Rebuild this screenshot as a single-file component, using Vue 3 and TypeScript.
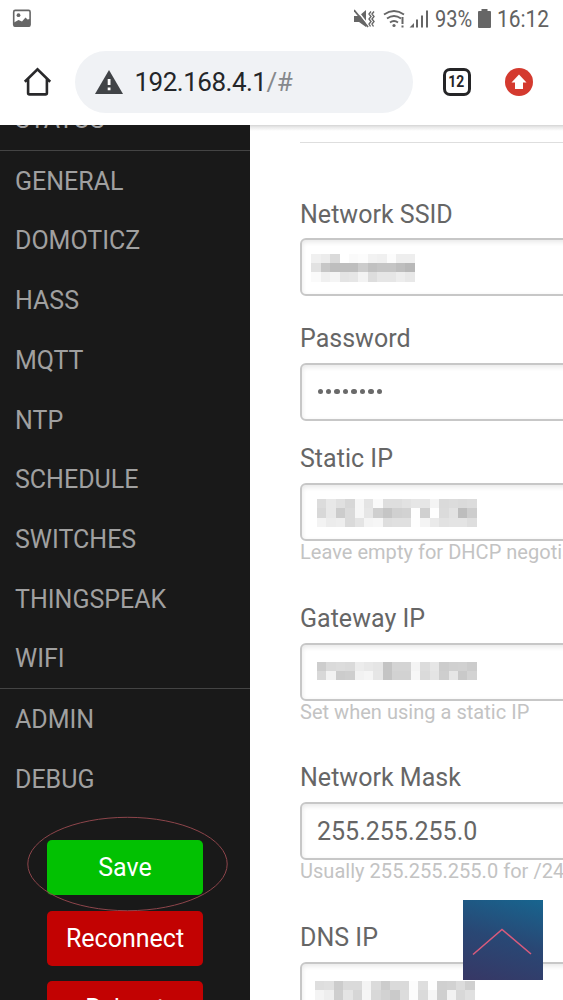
<script setup lang="ts">
interface Mosaic {
  x: number
  y: number
  rows: number[][]
}
interface Field {
  label: string
  gap: string
  value?: string
  password?: boolean
  hint?: string
  mosaic?: Mosaic
}

const cell = 9.4
const mainItems: string[] = ['GENERAL', 'DOMOTICZ', 'HASS', 'MQTT', 'NTP', 'SCHEDULE', 'SWITCHES', 'THINGSPEAK', 'WIFI']
const systemItems: string[] = ['ADMIN', 'DEBUG']

const fields: Field[] = [
  {
    label: 'Network SSID', gap: 'first',
    mosaic: { x: 9.3, y: 14.6, rows: [
      [240, 236, 218, 255, 250, 252, 242, 240, 252, 238, 238],
      [226, 199, 190, 190, 190, 204, 193, 197, 197, 190, 184],
      [250, 240, 245, 228, 230, 243, 221, 230, 230, 237, 232],
    ] },
  },
  { label: 'Password', gap: 'second', password: true },
  {
    label: 'Static IP', gap: 'third', hint: 'Leave empty for DHCP negotiation',
    mosaic: { x: 15, y: 14.8, rows: [
      [220, 232, 224, 215, 246, 228, 250, 222, 222, 226, 230, 230, 244, 218, 220, 218, 220],
      [216, 232, 204, 218, 246, 230, 207, 197, 208, 210, 254, 208, 254, 219, 226, 189, 205],
      [243, 236, 238, 218, 228, 244, 246, 222, 224, 224, 254, 244, 234, 226, 228, 228, 222],
    ] },
  },
  {
    label: 'Gateway IP', gap: 'hinted', hint: 'Set when using a static IP',
    mosaic: { x: 15, y: 17.5, rows: [
      [205, 218, 220, 218, 236, 232, 229, 196, 212, 212, 244, 220, 230, 204, 208, 209, 204],
      [216, 242, 204, 206, 242, 245, 230, 196, 210, 210, 247, 218, 228, 206, 230, 201, 211],
    ] },
  },
  { label: 'Network Mask', gap: 'hinted', value: '255.255.255.0', hint: 'Usually 255.255.255.0 for /24 networks' },
  {
    label: 'DNS IP', gap: 'hinted',
    mosaic: { x: 13, y: 18, rows: [
      [222, 224, 204, 218, 218, 244, 219, 204, 218, 218, 252, 222, 254, 208, 210, 220, 208],
      [244, 238, 206, 228, 214, 246, 216, 210, 202, 220, 252, 218, 246, 207, 242, 216, 224],
      [244, 238, 206, 228, 214, 246, 216, 210, 202, 220, 252, 218, 246, 207, 242, 216, 224],
    ] },
  },
]

const grey = (v: number): string => `rgb(${v},${v},${v})`
</script>

<template>
  <div class="screen">
    <header class="chrome">
      <div class="status">
        <svg class="picture" width="20" height="20" viewBox="0 0 20 20">
          <rect x="1.7" y="1.4" width="16.4" height="15.8" rx="1.5" fill="#fff" stroke="#666" stroke-width="1.6" />
          <circle cx="6.5" cy="6.2" r="1.9" fill="#666" />
          <path d="M2 13.5l4.5-2.5 3.5 1.5 3.5-4 2 2 2.5-.5v7.5H2z" fill="#666" />
        </svg>
        <svg class="signals" width="78" height="22" viewBox="0 0 78 22">
          <g fill="none" stroke="#666" stroke-width="1.6">
            <path d="M0 7h5l7-6v17l-7-5H0z" fill="#666" stroke="none" />
            <path d="M2 0l13 17" stroke="#fff" stroke-width="1.6" />
            <path d="M0 1l14 17" stroke-width="1.8" />
            <path d="M17 2.5l-2 2.5 2 2.5-2 2.5 2 2.5-2 2.5 1.5 2.5M20 2.5l-2 2.5 2 2.5-2 2.5 2 2.5-2 2.5 1.5 2.5" stroke-width="1.4" />
            <path d="M30 5.5Q40-1.5 50 5.5M33 9.5q7-5 14 0M36 13.5q4-3 8 0" stroke-width="1.8" />
            <path d="M48.5 8v7M48.5 16.5v2" stroke-width="2" />
          </g>
          <circle cx="40" cy="16.5" r="1.6" fill="#666" />
          <path d="M55.5 18.5l4.5-4.5v4.5zM62 10.5h2v8h-2zM67 6.5h2v12h-2zM72 1.5h2v17h-2z" fill="#666" />
        </svg>
        <span class="percent">93%</span>
        <svg class="battery" width="13" height="19" viewBox="0 0 13 19"><path d="M3.5 0h6v2H12q1 0 1 1v15q0 1-1 1H1q-1 0-1-1V3q0-1 1-1h2.5z" fill="#666" /></svg>
        <span class="clock">16:12</span>
      </div>
      <div class="toolbar">
        <svg class="home" width="30" height="30" viewBox="0 0 30 30">
          <path d="M1.8 14.8L14.5 2.3l12.7 12.5M5.1 12v14q0 1.4 1.4 1.4h16q1.4 0 1.4-1.4V12" fill="none" stroke="#29292b" stroke-width="2.6" />
        </svg>
        <div class="address">
          <svg width="28" height="24" viewBox="0 0 28 24">
            <path d="M14 0l14 24H0z" fill="#414447" />
            <path d="M12.7 9h2.8v6h-2.8zM12.7 17.5h2.8v2.8h-2.8z" fill="#fff" />
          </svg>
          <span class="url">192.168.4.1<i>/#</i></span>
        </div>
        <div class="tabs"><span>12</span></div>
        <svg class="update" width="28" height="28" viewBox="0 0 28 28">
          <circle cx="14" cy="14" r="14" fill="#d43a2f" />
          <path d="M14 6.5l7.5 8H18V21h-8v-6.5H6.5z" fill="#fff" />
        </svg>
      </div>
    </header>

    <div class="page">
      <aside class="sidebar">
        <nav>
          <a class="item hidden-top">STATUS</a>
          <div class="group">
            <a v-for="item in mainItems" :key="item" class="item">{{ item }}</a>
          </div>
          <div class="group">
            <a v-for="item in systemItems" :key="item" class="item">{{ item }}</a>
          </div>
        </nav>
        <div class="buttons">
          <div class="button save">Save</div>
          <div class="button">Reconnect</div>
          <div class="button">Reboot</div>
          <svg class="ring" width="202" height="96" viewBox="0 0 202 96">
            <ellipse cx="100.5" cy="48" rx="99.7" ry="46.7" fill="none" stroke="#8d454b" stroke-width="1" />
          </svg>
        </div>
      </aside>
      <main class="content">
        <hr />
        <section v-for="field in fields" :key="field.label" class="field" :class="field.gap">
          <label>{{ field.label }}</label>
          <div class="input">
            <span v-if="field.value" class="value">{{ field.value }}</span>
            <span v-if="field.password" class="dots"><b v-for="n in 8" :key="n" /></span>
            <svg v-if="field.mosaic" width="262" height="56" viewBox="0 0 262 56" shape-rendering="crispEdges">
              <g :transform="`translate(${field.mosaic.x} ${field.mosaic.y})`">
                <template v-for="(row, r) in field.mosaic.rows" :key="r">
                  <rect v-for="(v, c) in row" :key="c" :x="c * cell" :y="r * cell" :width="cell" :height="cell" :fill="grey(v)" />
                </template>
              </g>
            </svg>
          </div>
          <p v-if="field.hint">{{ field.hint }}</p>
        </section>
      </main>
    </div>

    <div class="to-top">
      <svg width="80" height="80" viewBox="0 0 80 80"><path d="M10 54.5L39 29.5 68 54" fill="none" stroke="#d85b7c" stroke-width="1.6" /></svg>
    </div>
  </div>
</template>

<style>
body { margin: 0; overflow: hidden; }
</style>
<style scoped>
* { box-sizing: border-box; }
.screen { position: relative; width: 563px; height: 1000px; overflow: hidden; background: #fff; font-family: Roboto, sans-serif; display: flex; flex-direction: column; }
.chrome { height: 125px; flex: none; background: #fff; }
.status { display: flex; height: 40px; padding: 9px 0 0 12px; color: #626262; font-size: 23px; line-height: 22px; }
.signals { margin-left: 322px; }
.percent { width: 38px; margin-left: 3px; white-space: nowrap; transform: scaleX(.87); transform-origin: left; }
.battery { margin-left: 5px; }
.clock { margin-left: 6px; white-space: nowrap; transform: scaleX(.91); transform-origin: left; }
.toolbar { display: flex; align-items: center; height: 63px; margin-top: 10px; padding-left: 23px; }
.home { margin-right: 22px; }
.address { width: 338px; height: 62px; border-radius: 31px; background: #f0f2f5; display: flex; align-items: center; padding-left: 20px; }
.url { font-size: 26px; letter-spacing: -.5px; margin-left: 11.5px; color: #242629; }
.url i { font-style: normal; color: #86898c; }
.tabs { width: 28px; height: 28px; margin-left: 29.5px; border: 3px solid #252527; border-radius: 7px; font-size: 16px; font-weight: 700; line-height: 22px; color: #252527; display: flex; justify-content: center; }
.tabs span { transform: scaleX(.87); }
.update { margin-left: 34px; }
.page { display: flex; height: 875px; overflow: hidden; }
.sidebar { width: 250px; flex: none; background: #191919; }
.item { display: block; height: 59.7px; line-height: 61.6px; padding-left: 15px; font-size: 25px; color: #a0a0a0; }
.item.hidden-top { margin-top: -34.9px; line-height: 59px; }
.group { border-top: 1px solid #444; }
.buttons { position: relative; padding: 31.6px 47px 0; }
.button { width: 156px; height: 55px; line-height: 55px; margin-bottom: 15.6px; border-radius: 5px; background: #c20202; color: #fff; font-size: 25px; text-align: center; }
.save { background: #02c102; }
.ring { position: absolute; left: 27px; top: 7.6px; }
.content { width: 313px; padding-left: 50px; overflow: hidden; background: linear-gradient(#d4d4d4, #e8e8e8 2px, #fff 6px); }
hr { margin: 17px 0 0; border: 0; height: 1px; background: #dedede; }
.field { width: 400px; color: #666; }
.first { height: 124.5px; margin-top: 56px; }
.first label { padding-top: 1px; }
.second { height: 120px; }
.third { height: 160px; }
.hinted { height: 159.5px; }
label { display: block; height: 39.2px; line-height: 30px; font-size: 25px; letter-spacing: .02px; }
.input { height: 58px; border: 2px solid #c7c7c7; border-radius: 6px; box-shadow: inset 0 2px 5px #e7e7e7; display: flex; align-items: center; }
.input svg { display: block; flex: none; align-self: flex-start; margin: -1px 0 0; }
.value { padding-left: 15px; font-size: 25px; }
.dots { display: flex; gap: 3.4px; padding-left: 15.5px; }
.dots b { width: 5.1px; height: 5.1px; border-radius: 50%; background: #6a6a6a; }
p { margin: 0; font-size: 20px; line-height: 23px; color: #c3c3c3; white-space: nowrap; letter-spacing: .03px; }
.to-top { position: absolute; left: 463px; top: 900px; width: 80px; height: 80px; background: linear-gradient(15deg, #373765, #294774 50%, #17658f); }
</style>
